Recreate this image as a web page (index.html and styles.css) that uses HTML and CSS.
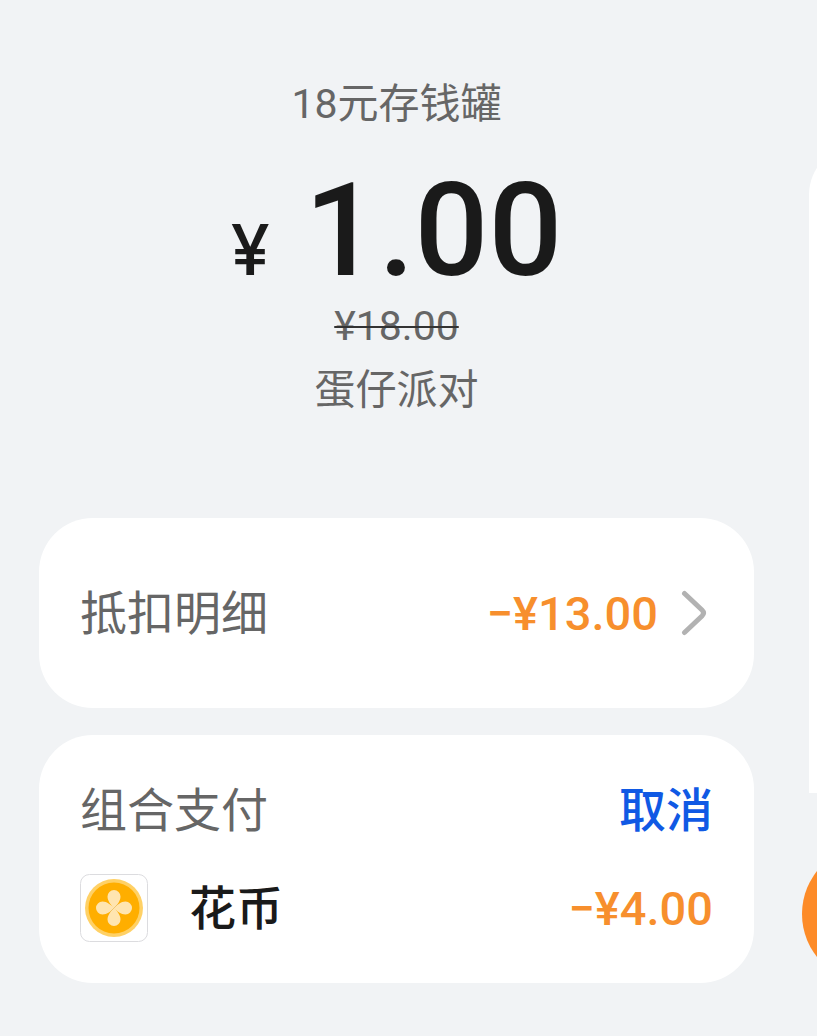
FILE: index.html
```
<!DOCTYPE html>
<html lang="zh-CN">
  <head>
    <meta charset="UTF-8" />
    <meta name="viewport" content="width=device-width, initial-scale=1.0" />
    <title>18元存钱罐</title>
    <link rel="stylesheet" href="styles.css">
  </head>
  <body>
    <main class="pay">
      <header class="summary">
        <h1 class="product">18元存钱罐</h1>
        <p class="price"><span class="currency">¥</span><span>1.00</span></p>
        <p class="old-price"><s>¥18.00</s></p>
        <p class="merchant">蛋仔派对</p>
      </header>

      <button type="button" class="card discount">
        <span class="label">抵扣明细</span>
        <span class="amount">−¥13.00</span>
        <svg class="chevron" viewBox="0 0 26 46" aria-hidden="true">
          <path d="M3.500 3.500 L21 20 Q24 23 21 26 L3.500 42.500" />
        </svg>
      </button>

      <section class="card combo">
        <div class="row">
          <h2 class="label">组合支付</h2>
          <button type="button" class="cancel">取消</button>
        </div>
        <div class="row">
          <svg class="coin" viewBox="0 0 68 68" aria-hidden="true">
            <rect x=".5" y=".5" width="67" height="67" rx="9" fill="#fff" stroke="#dcdcdf" />
            <circle cx="34" cy="34" r="29" fill="#ffd166" />
            <circle cx="34" cy="34" r="25.500" fill="#ffae00" />
            <g fill="#ffe5b0">
              <path id="petal" d="M34 34.500 C31 31 27.500 27 27.500 22.500 A6.500 6.500 0 0 1 40.500 22.500 C40.500 27 37 31 34 34.500z" />
              <use href="#petal" transform="rotate(90 34 34)" />
              <use href="#petal" transform="rotate(180 34 34)" />
              <use href="#petal" transform="rotate(270 34 34)" />
            </g>
            <path d="M30 38 L38 30" stroke="#e8b95c" stroke-width=".7" />
          </svg>
          <span class="coin-name">花币</span>
          <span class="amount">−¥4.00</span>
        </div>
      </section>
    </main>

    <!-- next sheet, peeking in from the right -->
    <div class="next-panel"></div>
    <div class="next-dot"></div>
  </body>
</html>
```
FILE: styles.css
```
* {
  box-sizing: border-box;
}

body {
  margin: 0;
  min-height: 100vh;
  position: relative;
  overflow-x: hidden;
  background: #f1f3f5;
  color: #1a1a1a;
  font-family: Roboto, "Noto Sans CJK SC", sans-serif;
}

h1,
h2,
p {
  margin: 0;
  font-weight: 400;
}

button {
  border: 0;
  font-family: inherit;
  cursor: pointer;
}

.pay {
  padding: 74px 63px 54px 39px;
}

.summary {
  display: flex;
  flex-direction: column;
  align-items: center;
  margin-bottom: 94px;
  color: #666;
}

.product {
  font-size: 41px;
  line-height: 60px;
}

.merchant {
  font-size: 41px;
  line-height: 68px;
}

.price {
  display: flex;
  align-items: baseline;
  gap: 35px;
  padding-top: 32px;
  color: #1a1a1a;
  font-size: 130px;
  font-weight: 500;
  line-height: 130px;
}

.currency {
  font-family: Inter, sans-serif;
  font-size: 70px;
  line-height: 70px;
}

.old-price {
  font-size: 41px;
  line-height: 60px;
}

.old-price s {
  text-decoration-thickness: 2px;
  text-decoration-color: #333;
}

.card {
  width: 100%;
  padding: 40px 41px;
  border-radius: 54px;
  background: #fff;
}

.discount {
  display: flex;
  align-items: center;
  height: 190px;
  margin-bottom: 27px;
  text-align: left;
}

.label {
  padding-top: 2px;
  color: #666;
  font-size: 47px;
  line-height: 68px;
}

.amount {
  margin-left: auto;
  color: #f78f2d;
  font-size: 47px;
  font-weight: 500;
}

.chevron {
  width: 26px;
  height: 46px;
  margin: 0 6px 0 23px;
  fill: none;
  stroke: #b2b2b2;
  stroke-width: 5;
  stroke-linecap: round;
}

.combo {
  display: flex;
  flex-direction: column;
  gap: 28px;
}

.row {
  display: flex;
  align-items: center;
}

.cancel {
  margin-left: auto;
  padding: 2px 0 0;
  background: none;
  color: #1059e4;
  font-size: 47px;
  font-weight: 500;
  line-height: 68px;
}

.coin {
  width: 68px;
  height: 68px;
  margin-right: 41px;
}

.coin-name {
  padding-top: 2px;
  font-size: 47px;
  font-weight: 500;
  line-height: 68px;
}

.next-panel {
  position: absolute;
  top: 145px;
  right: 0;
  width: 8px;
  height: 648px;
  overflow: hidden;
}

.next-panel::before {
  content: "";
  display: block;
  width: 200px;
  height: 700px;
  border-radius: 50px;
  background: #fff;
}

.next-dot {
  position: absolute;
  top: 845px;
  right: 0;
  width: 15px;
  height: 138px;
  overflow: hidden;
}

.next-dot::before {
  content: "";
  display: block;
  width: 138px;
  height: 138px;
  border-radius: 50%;
  background: #fd8b28;
}
```
